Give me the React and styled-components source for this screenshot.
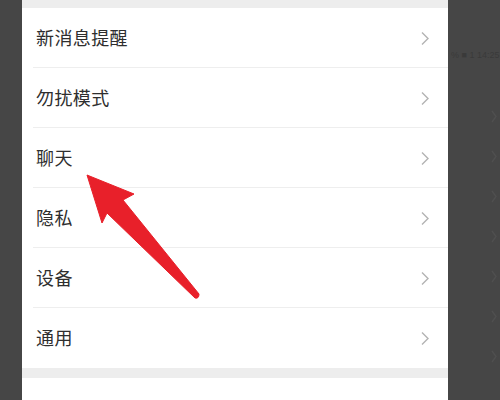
import React from "react";
import styled, { createGlobalStyle } from "styled-components";

const Global = createGlobalStyle`
  html, body { margin: 0; padding: 0; background: #464646; }
  body { width: 500px; height: 400px; overflow: hidden; font-family: "Noto Sans CJK SC", "Noto Sans", sans-serif; }
`;

const Screen = styled.div`
  position: relative;
  display: flex;
  width: 500px;
  height: 400px;
  background: #464646;
`;

const SideStrip = styled.div`
  width: ${(p) => p.$w}px;
  flex: none;
  position: relative;
`;

const Panel = styled.div`
  width: 426px;
  flex: none;
  display: flex;
  flex-direction: column;
  background: #ffffff;
`;

const GrayBand = styled.div`
  height: ${(p) => p.$h}px;
  background: #ededed;
  flex: none;
`;

const Row = styled.div`
  height: 60px;
  flex: none;
  display: flex;
  align-items: center;
  justify-content: space-between;
  padding: 0 18px 0 14px;
  box-sizing: border-box;
  position: relative;
  &:after {
    content: "";
    position: absolute;
    left: 11px;
    right: 0;
    bottom: 0;
    height: 1px;
    background: ${(p) => (p.$last ? "transparent" : "#eeeeee")};
  }
`;

const Label = styled.span`
  font-size: 18px;
  color: #2e2e2e;
  letter-spacing: 0.4px;
  line-height: 1;
  margin-top: -2px;
`;

const Chevron = () => (
  <svg width="10" height="15" viewBox="0 0 10 15">
    <path d="M2 1.5 L8 7.5 L2 13.5" fill="none" stroke="#b3b3b3" strokeWidth="1.4" />
  </svg>
);

const Rest = styled.div`
  flex: 1;
  background: #ffffff;
`;

const FaintTime = styled.div`
  position: absolute;
  top: 50px;
  left: 3px;
  font-family: "Liberation Sans", sans-serif;
  font-size: 9px;
  color: #3a3a3a;
  white-space: nowrap;
`;

const FaintChevrons = styled.div`
  position: absolute;
  top: 110px;
  right: 3px;
  display: flex;
  flex-direction: column;
  gap: 27px;
`;

const FaintChevron = () => (
  <svg width="6" height="13" viewBox="0 0 6 13">
    <path d="M1 1 L5 6.5 L1 12" fill="none" stroke="#505050" strokeWidth="1.3" />
  </svg>
);

const ArrowLayer = styled.svg`
  position: absolute;
  left: 0;
  top: 0;
  pointer-events: none;
`;

const items = ["新消息提醒", "勿扰模式", "聊天", "隐私", "设备", "通用"];

export default function App() {
  return (
    <Screen>
      <Global />
      <SideStrip $w={22} />
      <Panel>
        <GrayBand $h={8} />
        {items.map((t, i) => (
          <Row key={t} $last={i === items.length - 1}>
            <Label>{t}</Label>
            <Chevron />
          </Row>
        ))}
        <GrayBand $h={10} />
        <Rest />
      </Panel>
      <SideStrip $w={52}>
        <FaintTime>% ■ 1 14:25</FaintTime>
        <FaintChevrons>
          {[0, 1, 2, 3, 4, 5, 6].map((k) => (
            <FaintChevron key={k} />
          ))}
        </FaintChevrons>
      </SideStrip>
      <ArrowLayer width="500" height="400" viewBox="0 0 500 400">
        <path
          d="M87 175 L134 194 L123 200 L199 294 Q199 299 195 298 L107 213 L102 223 Z"
          fill="#e8202a"
          stroke="#e8202a"
          strokeWidth="1"
          strokeLinejoin="round"
        />
      </ArrowLayer>
    </Screen>
  );
}
